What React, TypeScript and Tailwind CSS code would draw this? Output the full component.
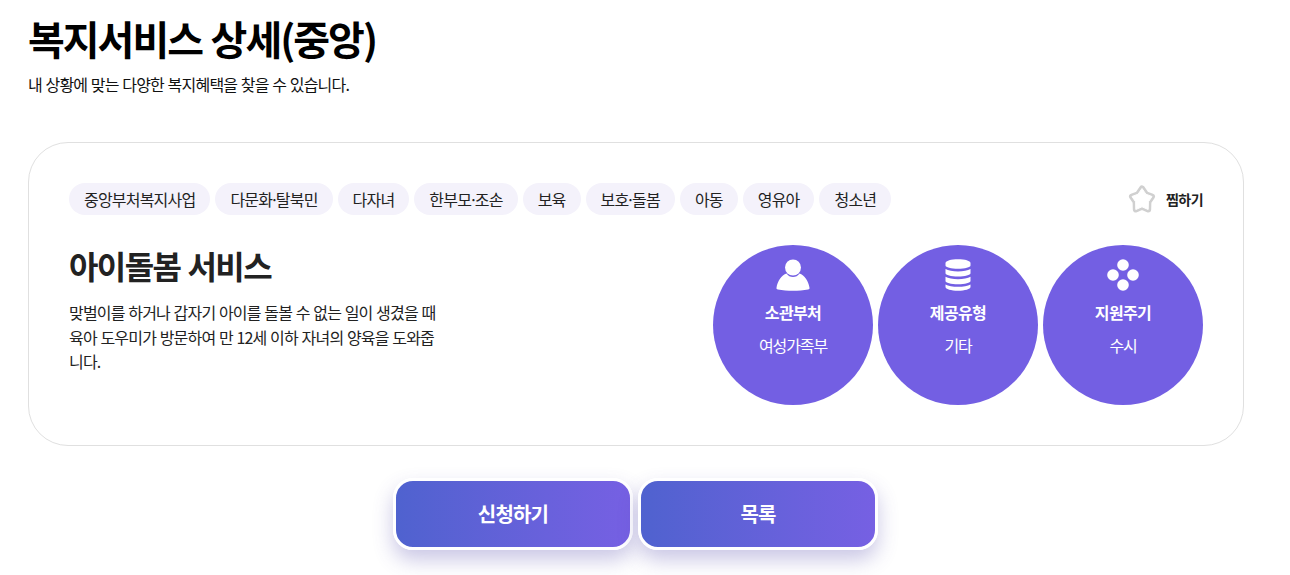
import type { ReactNode } from "react";

const tags = [
  "중앙부처복지사업",
  "다문화·탈북민",
  "다자녀",
  "한부모·조손",
  "보육",
  "보호·돌봄",
  "아동",
  "영유아",
  "청소년",
];

function PersonIcon() {
  return (
    <svg width="34" height="32" viewBox="0 0 34 32" fill="#fff">
      <circle cx="17" cy="8.500" r="8" />
      <path d="M10.500 14.500c1.600 2.400 3.900 3.600 6.500 3.600s4.900-1.200 6.500-3.600c5 1.800 9 7.600 10 14.300.2 1-.4 1.500-1.400 1.700-4.500.9-10 1.300-15.100 1.300s-10.600-.4-15.100-1.300c-1-.2-1.600-.7-1.400-1.700 1-6.700 5-12.500 10-14.300z" />
    </svg>
  );
}

function DatabaseIcon() {
  return (
    <svg width="26" height="32" viewBox="0 0 26 32" fill="#fff">
      <path d="M.5 4C.5 1.800 6.100.2 13 .2S25.500 1.800 25.500 4v2.500c0 1.800-5.600 3.200-12.500 3.200S.5 8.300.5 6.500z" />
      <path d="M.5 10c2.600 1.700 7.400 2.400 12.500 2.400s9.900-.7 12.500-2.400v4.300c0 1.800-5.600 3.200-12.500 3.200S.5 16.100.5 14.300z" />
      <path d="M.5 17.800c2.600 1.700 7.400 2.400 12.500 2.400s9.900-.7 12.500-2.400v4.300c0 1.800-5.600 3.200-12.500 3.200S.5 23.900.5 22.100z" />
      <path d="M.5 25.400c2.600 1.700 7.400 2.400 12.500 2.400s9.900-.7 12.500-2.400V28c0 2-5.600 3.800-12.500 3.800S.5 30 .5 28z" />
    </svg>
  );
}

function DotsIcon() {
  return (
    <svg width="32" height="32" viewBox="0 0 32 32" fill="#fff">
      <circle cx="16" cy="6" r="5.800" />
      <circle cx="16" cy="26" r="5.800" />
      <circle cx="6" cy="16" r="5.800" />
      <circle cx="26" cy="16" r="5.800" />
    </svg>
  );
}

const starPoints = "14,3.500 17.900,9.200 24,11.500 20.400,16.800 20.200,24.500 14,21.800 7.800,24.500 7.600,16.800 4,11.500 10.100,9.200";

function StarIcon() {
  return (
    <svg width="28" height="28" viewBox="0 0 28 28" strokeLinejoin="round">
      <polygon points={starPoints} fill="#d0d0d0" stroke="#d0d0d0" strokeWidth="6" />
      <polygon points={starPoints} fill="#fff" stroke="#fff" strokeWidth="1" />
    </svg>
  );
}

// the middle dot is much narrower in the reference than the CJK font's glyph
function TagLabel({ text }: { text: string }) {
  const [left, right] = text.split("·");
  if (right === undefined) return <>{text}</>;
  return (
    <>
      {left}
      <span className="mx-[-2.250px]">·</span>
      {right}
    </>
  );
}

function InfoCircle({ icon, title, value }: { icon: ReactNode; title: string; value: string }) {
  return (
    <div className="flex h-40 w-40 flex-col items-center rounded-full bg-[#735fe3] pt-[14px] text-white">
      <div className="flex h-8 items-center">{icon}</div>
      <strong className="mt-[9px] text-[16px] leading-[24px] font-bold tracking-[-0.04em]">{title}</strong>
      <span className="mt-[9px] text-[16px] leading-[24px] tracking-[-0.07em]">{value}</span>
    </div>
  );
}

function ActionButton({ label }: { label: string }) {
  return (
    <button className="flex h-[72px] w-60 items-center justify-center rounded-[20px] border-[3px] border-white bg-gradient-to-r from-[#4f62cf] to-[#7660e3] text-[20px] font-bold tracking-[-0.04em] text-white shadow-[0_10px_20px_rgba(80,70,170,0.3)]">
      {label}
    </button>
  );
}

export default function App() {
  return (
    <div className="w-[1290px] bg-white pl-[28px] font-['Noto_Sans_CJK_KR','Noto_Sans',sans-serif] text-[#111]">
      <h1 className="pt-[8px] text-[40px] leading-[60px] font-bold tracking-[-0.05em] [word-spacing:1.500px] text-black">
        복지서비스 상세(중앙)
      </h1>
      <p className="mt-[4px] text-[16px] leading-[24px] tracking-[-0.05em] [word-spacing:0.8px]">
        내 상황에 맞는 다양한 복지혜택을 찾을 수 있습니다.
      </p>

      <section className="mt-[46px] w-[1216px] rounded-[40px] border border-[#e0e0e0] p-10">
        <div className="flex items-center justify-between">
          <ul className="flex gap-[5px]">
            {tags.map((tag) => (
              <li
                key={tag}
                className="flex h-8 items-center rounded-full bg-[#f4f2fb] px-[15px] text-[16px] tracking-[-0.05em] text-[#222]"
              >
                <TagLabel text={tag} />
              </li>
            ))}
          </ul>
          <button className="flex items-center gap-[10px] text-[14px] font-bold tracking-[-0.04em] text-[#222]">
            <StarIcon />
            찜하기
          </button>
        </div>

        <div className="mt-[30px] flex justify-between">
          <div className="w-[370px]">
            <h2 className="text-[32px] leading-[40px] font-bold tracking-[-0.05em] [word-spacing:1.500px] text-[#222]">
              아이돌봄 서비스
            </h2>
            <p className="mt-[15px] text-[16px] leading-[24.500px] tracking-[-0.05em] [word-spacing:0.8px] text-[#222]">
              맞벌이를 하거나 갑자기 아이를 돌볼 수 없는 일이 생겼을 때 육아 도우미가 방문하여 만 12세 이하 자녀의 양육을 도와줍니다.
            </p>
          </div>
          <div className="flex gap-[5px]">
            <InfoCircle icon={<PersonIcon />} title="소관부처" value="여성가족부" />
            <InfoCircle icon={<DatabaseIcon />} title="제공유형" value="기타" />
            <InfoCircle icon={<DotsIcon />} title="지원주기" value="수시" />
          </div>
        </div>
      </section>

      <div className="mt-[32px] flex w-[1215px] justify-center gap-[5px] pb-[25px]">
        <ActionButton label="신청하기" />
        <ActionButton label="목록" />
      </div>
    </div>
  );
}
